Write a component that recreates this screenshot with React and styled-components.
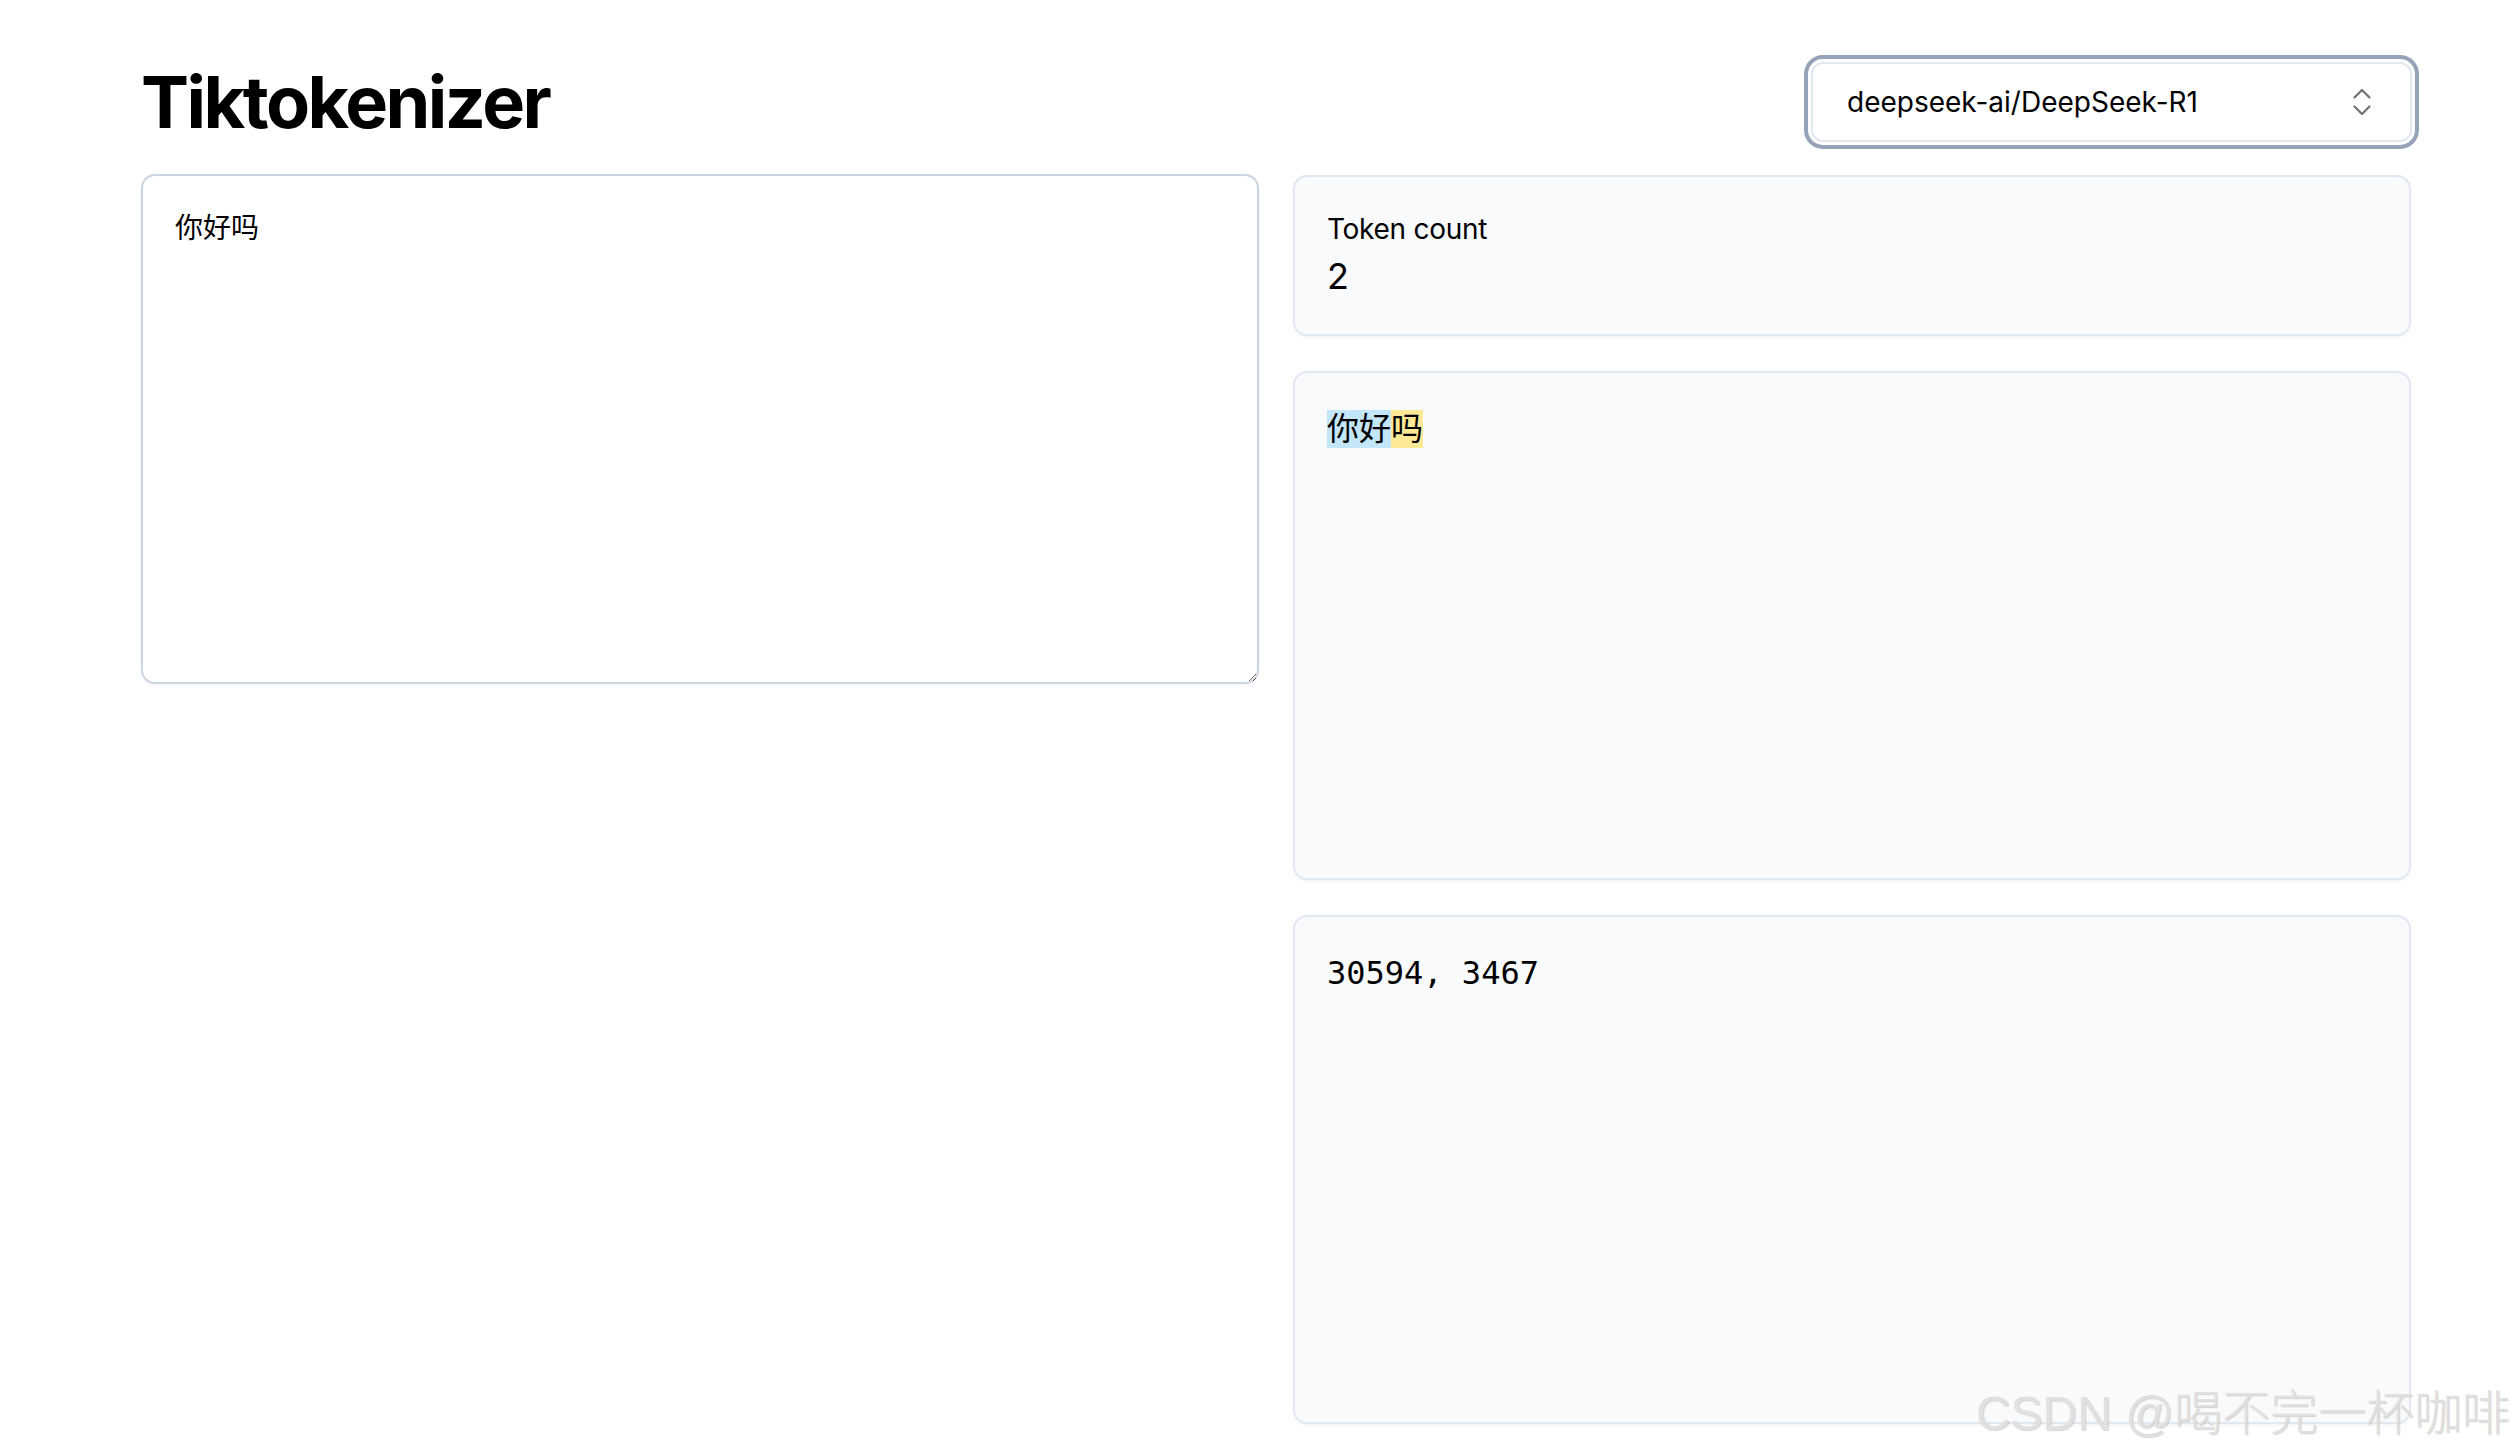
import { useState } from "react";
import styled, { createGlobalStyle } from "styled-components";
import { ChevronsUpDown } from "lucide-react";

const GlobalStyle = createGlobalStyle`
  * {
    box-sizing: border-box;
  }

  body {
    margin: 0;
    background: #fff;
    color: #000;
    font-family: Inter, "Noto Sans", "Noto Sans CJK SC", sans-serif;
  }
`;

const TOKENS = [
  { text: "你好", id: 30594, color: "#c4e6fa" },
  { text: "吗", id: 3467, color: "#fde896" },
];

export default function App() {
  const [input, setInput] = useState("你好吗");

  return (
    <Page>
      <GlobalStyle />

      <Header>
        <Title>Tiktokenizer</Title>

        <ModelSelect type="button">
          <span>deepseek-ai/DeepSeek-R1</span>
          <ChevronsUpDown size={36} strokeWidth={1.5} color="#737373" />
        </ModelSelect>
      </Header>

      <Main>
        <InputArea value={input} onChange={(e) => setInput(e.target.value)} />

        <Results>
          <Panel>
            <Label>Token count</Label>
            <Count>{TOKENS.length}</Count>
          </Panel>

          <Panel $tall>
            <TokenText>
              {TOKENS.map((t) => (
                <Token key={t.id} $color={t.color}>
                  {t.text}
                </Token>
              ))}
            </TokenText>
          </Panel>

          <Panel $tall>
            <TokenIds>{TOKENS.map((t) => t.id).join(", ")}</TokenIds>
          </Panel>
        </Results>
      </Main>

      <Watermark>CSDN @喝不完一杯咖啡</Watermark>
    </Page>
  );
}

const Page = styled.div`
  position: relative;
  width: 2516px;
  height: 1456px;
  padding: 62px 0 0 141px;
  overflow: hidden;
`;

const Header = styled.header`
  display: flex;
  align-items: center;
  justify-content: space-between;
  width: 2271px;
  height: 80px;
`;

const Title = styled.h1`
  margin: 0;
  font-family: Inter, sans-serif;
  font-size: 72px;
  font-weight: 700;
  letter-spacing: -0.035em;
  line-height: 1;
`;

const ModelSelect = styled.button`
  display: flex;
  align-items: center;
  justify-content: space-between;
  width: 601px;
  height: 80px;
  padding: 0 30px 0 34px;
  background: #fff;
  border: 2px solid #e2e8f0;
  border-radius: 12px;
  box-shadow: 0 0 0 3px #fff, 0 0 0 7px #94a3b8;
  font-family: Inter, sans-serif;
  font-size: 28px;
  color: #000;
  cursor: pointer;
`;

const Main = styled.main`
  display: grid;
  grid-template-columns: 1118px 1118px;
  gap: 34px;
  align-items: start;
  margin-top: 32px;
`;

const InputArea = styled.textarea`
  display: block;
  width: 1118px;
  height: 510px;
  padding: 32px;
  border: 2px solid #cbd5e1;
  border-radius: 14px;
  box-shadow: 0 2px 3px rgba(0, 0, 0, 0.04);
  font-family: Inter, "Noto Sans CJK SC", sans-serif;
  font-size: 28px;
  line-height: 40px;
  color: #000;
  outline: none;
`;

const Results = styled.section`
  display: flex;
  flex-direction: column;
  gap: 35px;
  margin-top: 1px;
`;

const Panel = styled.div`
  height: ${(p) => (p.$tall ? "509px" : "161px")};
  padding: 32px;
  background: #f8fafc;
  border: 2px solid #e2e8f0;
  border-radius: 14px;
  box-shadow: 0 2px 3px rgba(0, 0, 0, 0.04);
`;

const Label = styled.div`
  font-size: 28px;
  line-height: 40px;
  letter-spacing: -0.01em;
`;

const Count = styled.div`
  font-size: 36px;
  line-height: 54px;
`;

const TokenText = styled.div`
  font-family: Inter, "Noto Sans CJK SC", sans-serif;
  font-size: 32px;
  line-height: 48px;
`;

const Token = styled.span`
  display: inline-block;
  line-height: 38px;
  background: ${(p) => p.$color};
`;

const TokenIds = styled.div`
  font-family: "DejaVu Sans Mono", "Liberation Mono", monospace;
  font-size: 32px;
  line-height: 48px;
`;

const Watermark = styled.div`
  position: absolute;
  right: 6px;
  bottom: 12px;
  font-family: "Liberation Sans", "Noto Sans CJK SC", sans-serif;
  font-size: 48px;
  font-weight: 300;
  color: #e0e0e0;
  text-shadow: 1px 1px 1px rgba(0, 0, 0, 0.16);
  pointer-events: none;
`;
